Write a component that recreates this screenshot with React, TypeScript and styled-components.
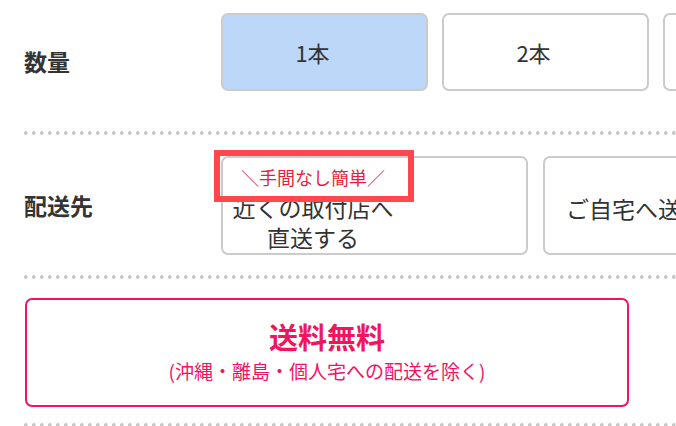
import React from 'react'
import styled, { createGlobalStyle } from 'styled-components'

const GlobalStyle = createGlobalStyle`
	html, body {
		margin: 0;
		padding: 0;
		background: #fff;
		overflow: hidden;
	}
	body {
		font-family: 'Noto Sans CJK JP', 'Noto Sans', sans-serif;
		color: #333;
	}
`

const Page = styled.div`
	width: 676px;
	height: 426px;
	padding-left: 24px;
	box-sizing: border-box;
	overflow: hidden;
`

const Row = styled.div<{ $top: number; $bottom: number }>`
	display: flex;
	align-items: center;
	padding: ${p => p.$top}px 0 ${p => p.$bottom}px;
`

const Label = styled.div<{ $shift?: number }>`
	width: 197px;
	flex-shrink: 0;
	font-size: 23px;
	font-weight: 700;
	line-height: 1;
	padding-top: ${p => p.$shift ?? 0}px;
`

const Options = styled.div<{ $gap: number }>`
	display: flex;
	gap: ${p => p.$gap}px;
`

const Option = styled.div<{ $selected?: boolean; $width: number; $height: number }>`
	position: relative;
	flex-shrink: 0;
	width: ${p => p.$width}px;
	height: ${p => p.$height}px;
	box-sizing: border-box;
	padding-right: 24px;
	border: 2px solid #cbcbcb;
	border-radius: 7px;
	background: ${p => (p.$selected ? '#bcd7f8' : '#fff')};
	display: flex;
	align-items: center;
	justify-content: center;
	font-size: 22px;
	color: #333;
`

const PlaceOption = styled(Option)`
	justify-content: flex-start;
	padding-right: 0;
`

const PlaceText = styled.div`
	width: 180px;
	text-align: center;
	font-size: 23px;
	line-height: 30px;
	margin-top: 5px;
`

const Tag = styled.div`
	font-size: 18px;
	line-height: 24px;
	color: #e41f3c;
	margin-bottom: 3px;
`

const Highlight = styled.div`
	position: absolute;
	left: -9px;
	top: -8px;
	width: 200px;
	height: 52px;
	box-sizing: border-box;
	border: 6px solid #ff484d;
	pointer-events: none;
`

const Divider = styled.div<{ $after: number }>`
	height: 4px;
	margin-bottom: ${p => p.$after}px;
	background-image: radial-gradient(circle at 1.75px 2px, #c8c8c8 1.6px, transparent 2.1px);
	background-size: 8px 4px;
	background-repeat: repeat-x;
`

const FreeBox = styled.div`
	margin-left: 1px;
	width: 604px;
	height: 109px;
	box-sizing: border-box;
	border: 2px solid #f2145f;
	border-radius: 7px;
	display: flex;
	flex-direction: column;
	align-items: center;
	justify-content: center;
	color: #f2145f;
`

const FreeTitle = styled.div`
	font-size: 29px;
	font-weight: 700;
	line-height: 36px;
	margin-top: -4px;
`

const FreeNote = styled.div`
	font-size: 19px;
	line-height: 26px;
	margin-top: 4px;
`

const FreeRow = styled.div`
	padding-bottom: 16px;
`

export default function App() {
	return (
		<>
			<GlobalStyle />
			<Page>
				<Row $top={13} $bottom={40}>
					<Label $shift={18}>数量</Label>
					<Options $gap={14}>
						<Option $selected $width={207} $height={78}>1本</Option>
						<Option $width={207} $height={78}>2本</Option>
						<Option $width={207} $height={78}>3本</Option>
					</Options>
				</Row>
				<Divider $after={0} />
				<Row $top={21} $bottom={20}>
					<Label>配送先</Label>
					<Options $gap={15}>
						<PlaceOption $width={307} $height={99}>
							<PlaceText>
								<Tag>＼手間なし簡単／</Tag>
								近くの取付店へ
								<br />
								直送する
							</PlaceText>
							<Highlight />
						</PlaceOption>
						<PlaceOption $width={307} $height={99}>
							<PlaceText>ご自宅へ送る</PlaceText>
						</PlaceOption>
					</Options>
				</Row>
				<Divider $after={19} />
				<FreeRow>
					<FreeBox>
						<FreeTitle>送料無料</FreeTitle>
						<FreeNote>(沖縄・離島・個人宅への配送を除く)</FreeNote>
					</FreeBox>
				</FreeRow>
				<Divider $after={0} />
			</Page>
		</>
	)
}
